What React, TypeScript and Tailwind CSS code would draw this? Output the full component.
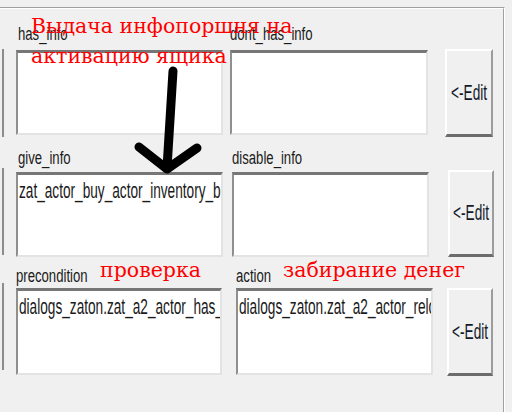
import type { ReactNode } from "react";
import clsx from "clsx";

/*
  Dialog-editor fragment: three rows of info/condition fields with
  "<-Edit" buttons, plus red hand-written notes and a drawn arrow.
*/

function Squeeze({ children, className }: { children: ReactNode; className?: string }) {
  return (
    <span className={clsx("inline-block whitespace-nowrap scale-x-[0.62]", className)}>
      {children}
    </span>
  );
}

function Label({ text, className }: { text: string; className?: string }) {
  return (
    <div className={clsx("h-[18px] text-[18px] leading-[18px] overflow-visible", className)}>
      <Squeeze className="origin-left scale-x-[0.73]">{text}</Squeeze>
    </div>
  );
}

function Box({ value, className }: { value?: string; className?: string }) {
  return (
    <div
      className={clsx(
        "overflow-hidden bg-white pl-px pt-[4px] text-[22px] leading-[24px]",
        "border-t-[3px] border-l-2 border-r-2 border-b-2",
        "border-t-[#767676] border-l-[#8f8f8f] border-r-[#e3e3e3] border-b-[#e3e3e3]",
        className
      )}
    >
      {value && <Squeeze className="origin-left">{value}</Squeeze>}
    </div>
  );
}

function EditButton({ className }: { className?: string }) {
  return (
    <div
      className={clsx(
        "flex items-center justify-center bg-[#f0f0f0] text-[22px] leading-[24px] text-[#141a2a]",
        "border-t-2 border-l-2 border-r-2 border-b-[3px]",
        "border-t-white border-l-white border-r-[#9c9c9c] border-b-[#6c6c6c]",
        className
      )}
    >
      <Squeeze className="origin-center scale-x-[0.6]">{"<-Edit"}</Squeeze>
    </div>
  );
}

function Stub({ className }: { className?: string }) {
  return <div className={clsx("w-[4px] shrink-0 border-r-2 border-r-[#8c8c8c]", className)} />;
}

function Note({ children, className }: { children: ReactNode; className?: string }) {
  return (
    <div
      className={clsx(
        "absolute whitespace-nowrap text-[20.5px] leading-[30px] text-[#ff0000]",
        "font-['DejaVu_Serif','Liberation_Serif',serif]",
        className
      )}
    >
      {children}
    </div>
  );
}

export default function App() {
  return (
    <div className="relative w-[512px] h-[412px] overflow-hidden bg-[#f0f0f0] text-[#1a1a1a] font-['Liberation_Sans',Arial,sans-serif]">
      {/* etched group frame */}
      <div className="mt-[7px] w-[505px] h-[420px] border-t border-r border-t-[#a0a0a0] border-r-white">
        <div className="h-full border-t border-r border-t-white border-r-[#a0a0a0]">
          {/* row 1 */}
          <div className="mt-[16px] flex items-start">
            <Stub className="mt-[24px] h-[88px]" />
            <div className="ml-[12px] w-[207px] shrink-0">
              <Label text="has_info" className="pl-[2px]" />
              <Box className="mt-[7px] h-[85px]" />
            </div>
            <div className="ml-[7px] w-[198px] shrink-0">
              <Label text="dont_has_info" />
              <Box className="mt-[7px] h-[85px]" />
            </div>
            <EditButton className="ml-[17px] mt-[24px] w-[48px] h-[88px] shrink-0" />
          </div>

          {/* row 2 */}
          <div className="mt-[12px] flex items-start">
            <Stub className="mt-[19px] h-[87px]" />
            <div className="ml-[12px] w-[207px] shrink-0">
              <Label text="give_info" className="pl-[2px]" />
              <Box value="zat_actor_buy_actor_inventory_box" className="mt-[5px] h-[85px]" />
            </div>
            <div className="ml-[9px] w-[197px] shrink-0">
              <Label text="disable_info" />
              <Box className="mt-[5px] h-[85px]" />
            </div>
            <EditButton className="ml-[19px] mt-[21px] w-[46px] h-[87px] shrink-0" />
          </div>

          {/* row 3 */}
          <div className="mt-[10px] flex items-start">
            <Stub className="mt-[16px] h-[87px]" />
            <div className="ml-[12px] w-[206px] shrink-0">
              <Label text="precondition" />
              <Box value="dialogs_zaton.zat_a2_actor_has_money" className="mt-[3px] h-[87px]" />
            </div>
            <div className="ml-[14px] w-[197px] shrink-0">
              <Label text="action" />
              <Box value="dialogs_zaton.zat_a2_actor_relocate_money" className="mt-[3px] h-[87px]" />
            </div>
            <EditButton className="ml-[14px] mt-[21px] w-[46px] h-[88px] shrink-0" />
          </div>
        </div>
      </div>

      {/* red notes drawn over the form */}
      <Note className="left-[31px] top-[11px]">
        <div>Выдача инфопоршня на</div>
        <div>активацию ящика</div>
      </Note>
      <Note className="left-[100px] top-[255px]">проверка</Note>
      <Note className="left-[283px] top-[255px]">забирание денег</Note>

      {/* hand-drawn arrow */}
      <svg className="absolute left-0 top-0 pointer-events-none" width="512" height="412" viewBox="0 0 512 412">
        <path
          d="M173 71 L167 168 M139 147 L167 169 L197 148"
          fill="none"
          stroke="#000"
          strokeWidth="9"
          strokeLinecap="round"
          strokeLinejoin="round"
        />
      </svg>
    </div>
  );
}
